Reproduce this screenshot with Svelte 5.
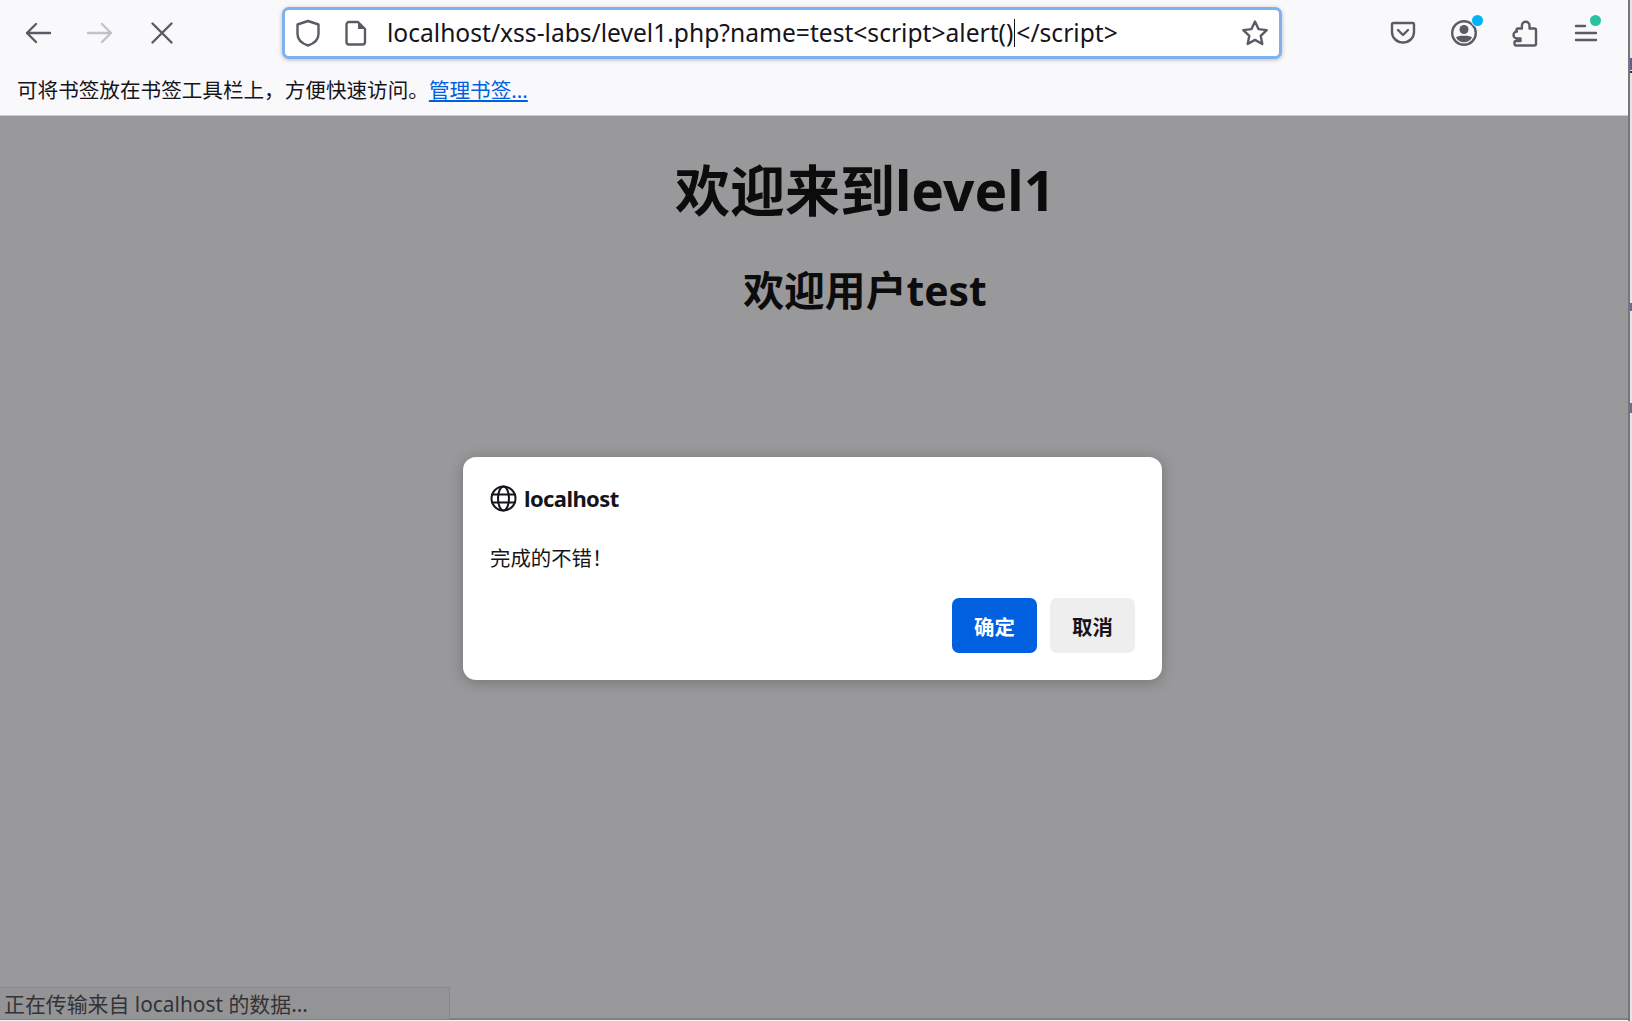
<script>
  const url = "localhost/xss-labs/level1.php?name=test<script>alert()";
  const urlEnd = "</" + "script>";
  // bits of the window behind that show through the right edge
  const marks = [
    { top: 58, height: 12, color: "#6a5a96" },
    { top: 71, height: 2, color: "#333" },
    { top: 303, height: 8, color: "#6a6a8a" },
    { top: 403, height: 10, color: "#6f6a8c" }
  ];
</script>

<div class="window">
  <div class="main">
    <header class="toolbar">
      <nav class="nav-row">
        <div class="nav-left">
          <button class="tool" aria-label="back">
            <svg width="28" height="28" viewBox="0 0 28 28"><path d="M26 14H3M12 5l-9 9 9 9" /></svg>
          </button>
          <button class="tool faded" aria-label="forward">
            <svg width="28" height="28" viewBox="0 0 28 28"><path d="M2 14h23M16 5l9 9-9 9" /></svg>
          </button>
          <button class="tool" aria-label="stop">
            <svg width="28" height="28" viewBox="0 0 28 28"><path d="M4.500 4.500l19 19M23.500 4.500l-19 19" /></svg>
          </button>
        </div>
        <div class="urlbar">
          <svg class="shield" width="26" height="28" viewBox="0 0 26 28"><path d="M13 2l10.500 3.500v9.500c0 5.500-4.500 9.500-10.500 11.500C7 24.500 2.500 20.500 2.500 15V5.500z" /></svg>
          <svg class="page-icon" width="22" height="26" viewBox="0 0 22 26"><path d="M4 2h9l7 7v13a2.500 2.500 0 0 1-2.500 2.500h-14A2.500 2.500 0 0 1 1.500 22V4.500A2.500 2.500 0 0 1 4 2z" /><path class="fill" d="M13 2l7 7h-7z" /></svg>
          <div class="url">{url}<span class="caret"></span>{urlEnd}</div>
          <svg class="star" width="28" height="28" viewBox="0 0 28 28"><path d="M14 2.500l3.500 7.600 8.200 1-6 5.700 1.600 8.200L14 20.900 6.700 25l1.600-8.200-6-5.700 8.200-1z" /></svg>
        </div>
        <div class="nav-right">
          <button class="tool" aria-label="pocket">
            <svg width="26" height="26" viewBox="0 0 26 26"><path d="M3.500 3h19A1.500 1.500 0 0 1 24 4.500V12c0 6-5 10.500-11 10.500S2 18 2 12V4.500A1.500 1.500 0 0 1 3.500 3z" /><path d="M8 10l5 5 5-5" /></svg>
          </button>
          <button class="tool" aria-label="account">
            <svg width="28" height="28" viewBox="0 0 28 28"><circle cx="14" cy="14" r="11.800" /><circle class="fill" cx="14" cy="10.500" r="4.500" /><path class="fill" d="M6 18.500c1-1.300 3-1.800 8-1.800s7 .5 8 1.800c-1.500 3-4.500 4.800-8 4.800s-6.500-1.800-8-4.800z" /></svg>
            <span class="dot blue"></span>
          </button>
          <button class="tool" aria-label="extensions">
            <svg width="26" height="28" viewBox="0 0 26 28"><path d="M4 26.500h18.500a1.500 1.500 0 0 0 1.500-1.500V11a1.500 1.500 0 0 0-1.500-1.500h-5V6.500a3.800 3.800 0 0 0-7.600 0v3H6a1.500 1.500 0 0 0-1.500 1.500v1.500H5a3.500 3.500 0 0 0 0 7h3.500v2.500H4a1.500 1.500 0 0 0-1.500 1.500V25A1.500 1.500 0 0 0 4 26.500z" /></svg>
          </button>
          <button class="tool" aria-label="menu">
            <svg width="24" height="22" viewBox="0 0 24 22"><path d="M2 4h9M2 11h20M2 18h20" /></svg>
            <span class="dot green"></span>
          </button>
        </div>
      </nav>
      <div class="bookmarks">可将书签放在书签工具栏上，方便快速访问。<a href="#top">管理书签...</a></div>
    </header>

    <main class="page">
      <h1>欢迎来到level1</h1>
      <h2>欢迎用户test</h2>

      <div class="dialog">
        <div class="dialog-title">
          <svg width="27" height="27" viewBox="0 0 27 27"><circle cx="13.500" cy="13.500" r="12" /><ellipse cx="13.500" cy="13.500" rx="5.500" ry="12" /><path d="M2 9.500h23M2 17.500h23" /></svg>
          <span>localhost</span>
        </div>
        <p>完成的不错！</p>
        <div class="actions">
          <button class="primary">确定</button>
          <button class="secondary">取消</button>
        </div>
      </div>

      <div class="status">正在传输来自 localhost 的数据...</div>
    </main>
    <div class="bottom-edge"></div>
  </div>
  <div class="edge">
    {#each marks as m}
      <i style="top: {m.top}px; height: {m.height}px; background: {m.color}"></i>
    {/each}
  </div>
</div>

<style>
  :global(body) {
    margin: 0;
    overflow: hidden;
  }

  .window {
    display: flex;
    width: 1632px;
    height: 1021px;
    font-family: "Noto Sans", "Noto Sans CJK SC", sans-serif;
    color: #15141a;
  }

  .main {
    flex: 1;
    display: flex;
    flex-direction: column;
    min-width: 0;
  }

  .edge {
    position: relative;
    width: 4px;
    background: #e6e6e8;
    border-left: 2px solid #77777a;
    box-sizing: border-box;
  }

  .edge i {
    position: absolute;
    left: 0;
    width: 2px;
  }

  .toolbar {
    height: 116px;
    flex: none;
    box-sizing: border-box;
    background: #f9f9fb;
    border-bottom: 1px solid #ccccce;
  }

  .nav-row {
    display: flex;
    align-items: center;
    height: 65px;
    padding: 0 12px 0 7px;
  }

  .nav-left {
    display: flex;
    gap: 1px;
    width: 275px;
  }

  .nav-right {
    display: flex;
    margin-left: auto;
  }

  .tool {
    position: relative;
    display: flex;
    align-items: center;
    justify-content: center;
    width: 61px;
    height: 50px;
    padding: 0;
    border: 0;
    background: none;
  }

  svg path,
  svg circle,
  svg ellipse {
    fill: none;
    stroke: #5b5b66;
    stroke-width: 2.4;
    stroke-linejoin: round;
    stroke-linecap: round;
  }

  svg .fill {
    fill: #5b5b66;
    stroke: none;
  }

  .faded path {
    stroke: #c2c2c8;
  }

  .dot {
    position: absolute;
    top: 7px;
    width: 11px;
    height: 11px;
    border-radius: 50%;
  }

  .dot.blue {
    right: 11px;
    background: #00b3f4;
    box-shadow: 0 0 0 1px #f9f9fb;
  }

  .dot.green {
    right: 15px;
    background: #2ac3a2;
  }

  .urlbar {
    display: flex;
    align-items: center;
    width: 1000px;
    height: 52px;
    box-sizing: border-box;
    padding: 0 10px;
    background: #fff;
    border: 3px solid #7fb1ef;
    border-radius: 7px;
    box-shadow: 0 1px 4px rgba(0, 0, 0, 0.25);
  }

  .shield {
    flex: none;
  }

  .page-icon {
    flex: none;
    margin-left: 24px;
  }

  .url {
    flex: 1;
    margin-left: 20px;
    font-size: 24.600px;
    white-space: nowrap;
    color: #15141a;
  }

  .caret {
    display: inline-block;
    width: 1px;
    height: 28px;
    margin: 0 1px;
    vertical-align: -5px;
    background: #15141a;
  }

  .star {
    flex: none;
  }

  .bookmarks {
    padding: 9px 0 0 17px;
    font-size: 20.600px;
    line-height: 32px;
    white-space: nowrap;
  }

  .bookmarks a {
    color: #0060df;
  }

  .page {
    position: relative;
    flex: 1;
    padding-left: 102px;
    text-align: center;
    background: #99999b;
    color: #0c0c0d;
    border-bottom: 2px solid #808083;
  }

  h1 {
    margin: 37px 0 0;
    font-size: 55px;
    line-height: 74px;
    font-weight: 700;
  }

  h2 {
    margin: 35px 0 0;
    font-size: 40.800px;
    line-height: 56px;
    font-weight: 700;
  }

  .dialog {
    position: absolute;
    left: 463px;
    top: 341px;
    width: 699px;
    height: 223px;
    box-sizing: border-box;
    padding: 26px 27px 27px 27px;
    text-align: left;
    color: #15141a;
    background: #fff;
    border-radius: 13px;
    box-shadow: 0 2px 14px rgba(30, 30, 35, 0.3);
  }

  .dialog-title {
    display: flex;
    align-items: center;
    gap: 7px;
    height: 30px;
    font-size: 22px;
    letter-spacing: -0.6px;
    font-weight: 700;
  }

  .dialog-title svg circle,
  .dialog-title svg ellipse,
  .dialog-title svg path {
    stroke: #15141a;
    stroke-width: 2;
  }

  p {
    margin: 29px 0 0;
    font-size: 20.400px;
    line-height: 32px;
  }

  .actions {
    display: flex;
    justify-content: flex-end;
    gap: 13px;
    margin-top: 24px;
  }

  .actions button {
    width: 85px;
    height: 55px;
    padding: 0;
    border: 0;
    border-radius: 7px;
    font: 700 20.400px "Noto Sans", "Noto Sans CJK SC", sans-serif;
  }

  .primary {
    background: #0060df;
    color: #fff;
  }

  .secondary {
    background: #eeeeef;
    color: #15141a;
  }

  .status {
    position: absolute;
    left: 0;
    bottom: -1px;
    width: 450px;
    height: 32px;
    box-sizing: border-box;
    padding-left: 4px;
    font-size: 20.900px;
    line-height: 33px;
    text-align: left;
    white-space: nowrap;
    color: #333336;
    background: #949496;
    border: 1px solid #88888a;
    border-left: 0;
    border-bottom: 0;
  }

  .bottom-edge {
    height: 1px;
    flex: none;
    background: #f4f4f4;
  }
</style>
